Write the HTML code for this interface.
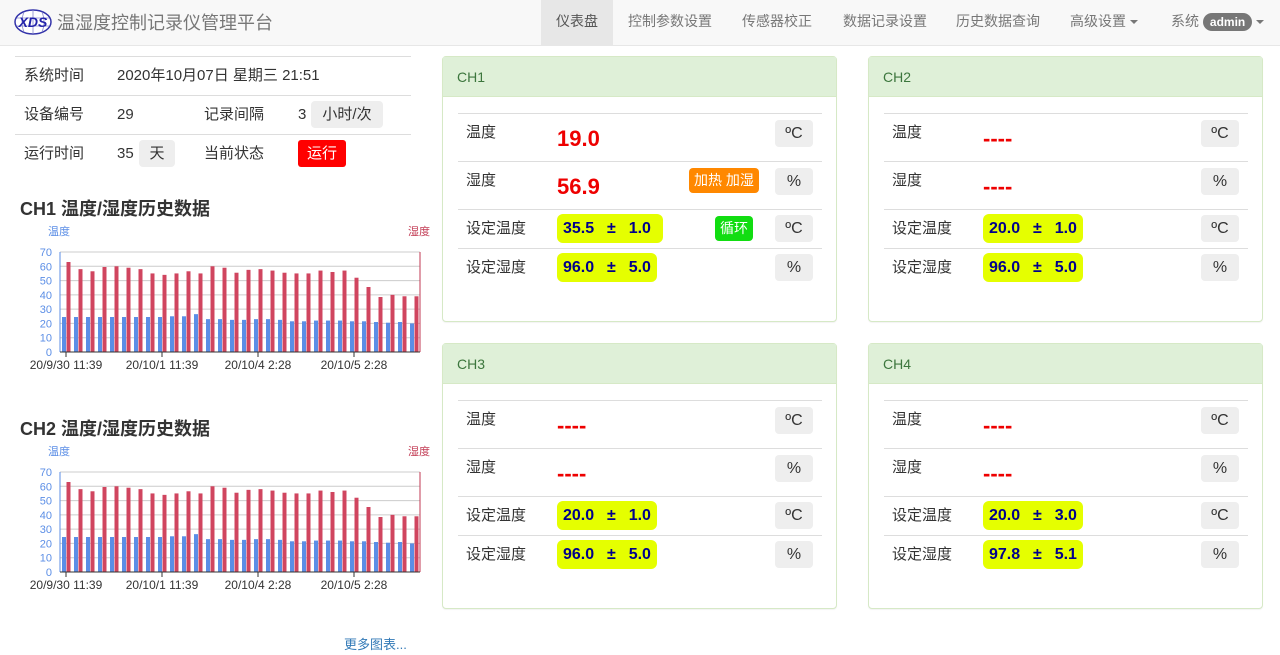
<!DOCTYPE html>
<html><head><meta charset="utf-8"><style>
*{box-sizing:border-box;margin:0;padding:0}
body{width:1280px;height:655px;overflow:hidden;background:#fff;font-family:"Liberation Sans","Noto Sans CJK SC",sans-serif;font-size:14px;color:#333;position:relative}
.nav{position:absolute;left:0;top:0;width:1280px;height:46px;background:#f8f8f8;border-bottom:1px solid #e7e7e7}
.brand{position:absolute;left:14px;top:9px;display:flex;align-items:center;font-size:18px;color:#777}
.nav a{position:absolute;top:0;height:46px;line-height:42px;color:#777;font-size:14px;text-decoration:none}
.caret{display:inline-block;width:0;height:0;border-left:4px solid transparent;border-right:4px solid transparent;border-top:4px solid #777;vertical-align:middle;margin-left:4px}
.badge{display:inline-block;background:#777;color:#fff;font-weight:bold;font-size:12px;border-radius:10px;padding:1px 7px;line-height:16px}
.abs{position:absolute}
.t{position:absolute;font-size:15px;line-height:20px;height:20px}
.hl{position:absolute;left:15px;width:396px;height:1px;background:#ddd}
.btn{position:absolute;background:#eee;border-radius:4px;text-align:center}
.panel{position:absolute;width:395px;height:266px;border:1px solid #d6e9c6;border-radius:4px;background:#fff;box-shadow:0 1px 1px rgba(0,0,0,.05)}
.ph{height:40px;background:#dff0d8;color:#3c763d;padding:12px 14px;font-size:14px;border-bottom:1px solid #d6e9c6}
.pl{position:absolute;left:15px;width:364px;height:1px;background:#ddd}
.lab{position:absolute;left:23px;font-size:15px;color:#333;line-height:20px}
.val{position:absolute;left:114px;font-size:22px;font-weight:bold;color:#e00}
.unit{position:absolute;left:332px;width:38px;height:27px;background:#eee;border-radius:4px;text-align:center;line-height:27px;font-size:16px;color:#333}
.set{position:absolute;left:114px;height:29px;background:#e5ff00;border-radius:6px;color:#00008b;font-weight:bold;font-size:16px;line-height:29px;padding:0 6px;white-space:pre;word-spacing:2px}
h3{position:absolute;left:20px;font-size:18px;font-weight:bold;color:#333}
</style></head><body>
<div class="nav">
 <div class="brand"><svg width="38" height="26" viewBox="0 0 38 26"><ellipse cx="19" cy="13" rx="18" ry="12" fill="#fff" stroke="#3333aa" stroke-width="1.5"/><path d="M3 9H35M3 17H35M19 1V25M10 3Q6 13 10 23M28 3Q32 13 28 23" stroke="#8888cc" stroke-width=".8" fill="none"/><text x="19" y="18" text-anchor="middle" font-family="Liberation Sans" font-style="italic" font-weight="bold" font-size="14" fill="#2222aa">XDS</text></svg><span style="margin-left:5px">温湿度控制记录仪管理平台</span></div>
 <a style="left:541px;width:72px;background:#e7e7e7;color:#555;text-align:center">仪表盘</a>
 <a style="left:628px">控制参数设置</a>
 <a style="left:742px">传感器校正</a>
 <a style="left:843px">数据记录设置</a>
 <a style="left:956px">历史数据查询</a>
 <a style="left:1070px">高级设置<span class="caret"></span></a>
 <a style="left:1171px">系统 <span class="badge">admin</span><span class="caret"></span></a>
</div>

<div class="hl" style="top:56px"></div>
<div class="hl" style="top:95px"></div>
<div class="hl" style="top:134px"></div>
<div class="t" style="left:24px;top:66px">系统时间</div>
<div class="t" style="left:117px;top:66px">2020年10月07日 星期三 21:51</div>
<div class="t" style="left:24px;top:105px">设备编号</div>
<div class="t" style="left:117px;top:105px">29</div>
<div class="t" style="left:204px;top:105px">记录间隔</div>
<div class="t" style="left:298px;top:105px">3</div>
<div class="btn" style="left:311px;top:101px;width:72px;height:27px;line-height:27px;font-size:15px">小时/次</div>
<div class="t" style="left:24px;top:144px">运行时间</div>
<div class="t" style="left:117px;top:144px">35</div>
<div class="btn" style="left:139px;top:140px;width:36px;height:27px;line-height:27px;font-size:15px">天</div>
<div class="t" style="left:204px;top:144px">当前状态</div>
<div class="abs" style="left:298px;top:140px;width:48px;height:27px;background:#f00;color:#fff;border-radius:3px;text-align:center;line-height:27px;font-size:15px">运行</div>

<h3 style="top:195px">CH1 温度/湿度历史数据</h3>
<svg id="c1" class="abs" style="left:0;top:220px" width="440" height="150"></svg>
<h3 style="top:415px">CH2 温度/湿度历史数据</h3>
<svg id="c2" class="abs" style="left:0;top:440px" width="440" height="150"></svg>
<div class="abs" style="left:344px;top:634px;color:#337ab7;font-size:13px">更多图表...</div>

<div class="panel" style="left:442px;top:56px"><div class="ph">CH1</div>
 <div class="pl" style="top:56px"></div><div class="pl" style="top:104px"></div><div class="pl" style="top:152px"></div><div class="pl" style="top:191px"></div>
 <div class="lab" style="top:66px">温度</div><div class="val" style="top:69px">19.0</div><div class="unit" style="top:63px">ºC</div>
 <div class="lab" style="top:114px">湿度</div><div class="val" style="top:117px">56.9</div>
 <div class="abs" style="left:246px;top:111px;width:70px;height:25px;background:#f80;color:#fff;border-radius:4px;text-align:center;line-height:25px;font-size:14px">加热 加湿</div>
 <div class="unit" style="top:111px">%</div>
 <div class="lab" style="top:162px">设定温度</div><div class="set" style="top:157px">35.5  ±  1.0 </div>
 <div class="abs" style="left:272px;top:159px;width:38px;height:25px;background:#1d1;color:#fff;border-radius:4px;text-align:center;line-height:25px;font-size:14px">循环</div>
 <div class="unit" style="top:158px">ºC</div>
 <div class="lab" style="top:201px">设定湿度</div><div class="set" style="top:196px">96.0  ±  5.0</div><div class="unit" style="top:197px">%</div>
</div>

<div class="panel" style="left:868px;top:56px"><div class="ph">CH2</div>
 <div class="pl" style="top:56px"></div><div class="pl" style="top:104px"></div><div class="pl" style="top:152px"></div><div class="pl" style="top:191px"></div>
 <div class="lab" style="top:66px">温度</div><div class="val" style="top:69px">----</div><div class="unit" style="top:63px">ºC</div>
 <div class="lab" style="top:114px">湿度</div><div class="val" style="top:117px">----</div><div class="unit" style="top:111px">%</div>
 <div class="lab" style="top:162px">设定温度</div><div class="set" style="top:157px">20.0  ±  1.0</div><div class="unit" style="top:158px">ºC</div>
 <div class="lab" style="top:201px">设定湿度</div><div class="set" style="top:196px">96.0  ±  5.0</div><div class="unit" style="top:197px">%</div>
</div>

<div class="panel" style="left:442px;top:343px"><div class="ph">CH3</div>
 <div class="pl" style="top:56px"></div><div class="pl" style="top:104px"></div><div class="pl" style="top:152px"></div><div class="pl" style="top:191px"></div>
 <div class="lab" style="top:66px">温度</div><div class="val" style="top:69px">----</div><div class="unit" style="top:63px">ºC</div>
 <div class="lab" style="top:114px">湿度</div><div class="val" style="top:117px">----</div><div class="unit" style="top:111px">%</div>
 <div class="lab" style="top:162px">设定温度</div><div class="set" style="top:157px">20.0  ±  1.0</div><div class="unit" style="top:158px">ºC</div>
 <div class="lab" style="top:201px">设定湿度</div><div class="set" style="top:196px">96.0  ±  5.0</div><div class="unit" style="top:197px">%</div>
</div>

<div class="panel" style="left:868px;top:343px"><div class="ph">CH4</div>
 <div class="pl" style="top:56px"></div><div class="pl" style="top:104px"></div><div class="pl" style="top:152px"></div><div class="pl" style="top:191px"></div>
 <div class="lab" style="top:66px">温度</div><div class="val" style="top:69px">----</div><div class="unit" style="top:63px">ºC</div>
 <div class="lab" style="top:114px">湿度</div><div class="val" style="top:117px">----</div><div class="unit" style="top:111px">%</div>
 <div class="lab" style="top:162px">设定温度</div><div class="set" style="top:157px">20.0  ±  3.0</div><div class="unit" style="top:158px">ºC</div>
 <div class="lab" style="top:201px">设定湿度</div><div class="set" style="top:196px">97.8  ±  5.1</div><div class="unit" style="top:197px">%</div>
</div>

<script>
var H=[63,58,56.5,59.5,60,59,58,55,54,55,56.5,55,60,59,55.5,57.5,58,57,55.5,55,55,57,56,57,52,45.5,38.5,40,39,39];
var T=[24.5,24.5,24.5,24.5,24.5,24.5,24.5,24.5,24.5,25,25,26.5,23,23,22.5,22.5,23,23,22.5,21.5,21.5,22,22,22,21.5,21.5,21,20.5,21,20];
function draw(id){
 var s='',x0=60,x1=420,y0=132,k=100/70;
 s+='<text x="48" y="15" font-size="11" fill="#5b8ee6">温度</text><text x="408" y="15" font-size="11" fill="#c23a53">湿度</text>';
 for(var v=0;v<=70;v+=10){var y=y0-v*k;s+='<line x1="'+x0+'" x2="'+x1+'" y1="'+y+'" y2="'+y+'" stroke="#ccc" stroke-width="1"/>';s+='<text x="52" y="'+(y+4)+'" font-size="11" fill="#5b8ee6" text-anchor="end">'+v+'</text>';}
 for(var i=0;i<30;i++){var gx=x0+i*12;
  s+='<rect x="'+(gx+2)+'" y="'+(y0-T[i]*k)+'" width="4" height="'+(T[i]*k)+'" fill="#5b8ee6"/>';
  s+='<rect x="'+(gx+6.5)+'" y="'+(y0-H[i]*k)+'" width="4" height="'+(H[i]*k)+'" fill="#d0455f"/>';}
 s+='<line x1="'+x0+'" x2="'+x0+'" y1="32" y2="'+y0+'" stroke="#5b8ee6"/><line x1="'+x1+'" x2="'+x1+'" y1="32" y2="'+y0+'" stroke="#c23a53"/><line x1="'+x0+'" x2="'+x1+'" y1="'+y0+'" y2="'+y0+'" stroke="#333"/>';
 var L=['20/9/30 11:39','20/10/1 11:39','20/10/4 2:28','20/10/5 2:28'];
 for(var j=0;j<4;j++){var tx=66+j*96;s+='<line x1="'+tx+'" x2="'+tx+'" y1="'+y0+'" y2="'+(y0+5)+'" stroke="#333"/><text x="'+tx+'" y="'+(y0+17)+'" font-size="12" fill="#333" text-anchor="middle">'+L[j]+'</text>';}
 document.getElementById(id).innerHTML=s;}
draw('c1');draw('c2');
</script>
</body></html>
